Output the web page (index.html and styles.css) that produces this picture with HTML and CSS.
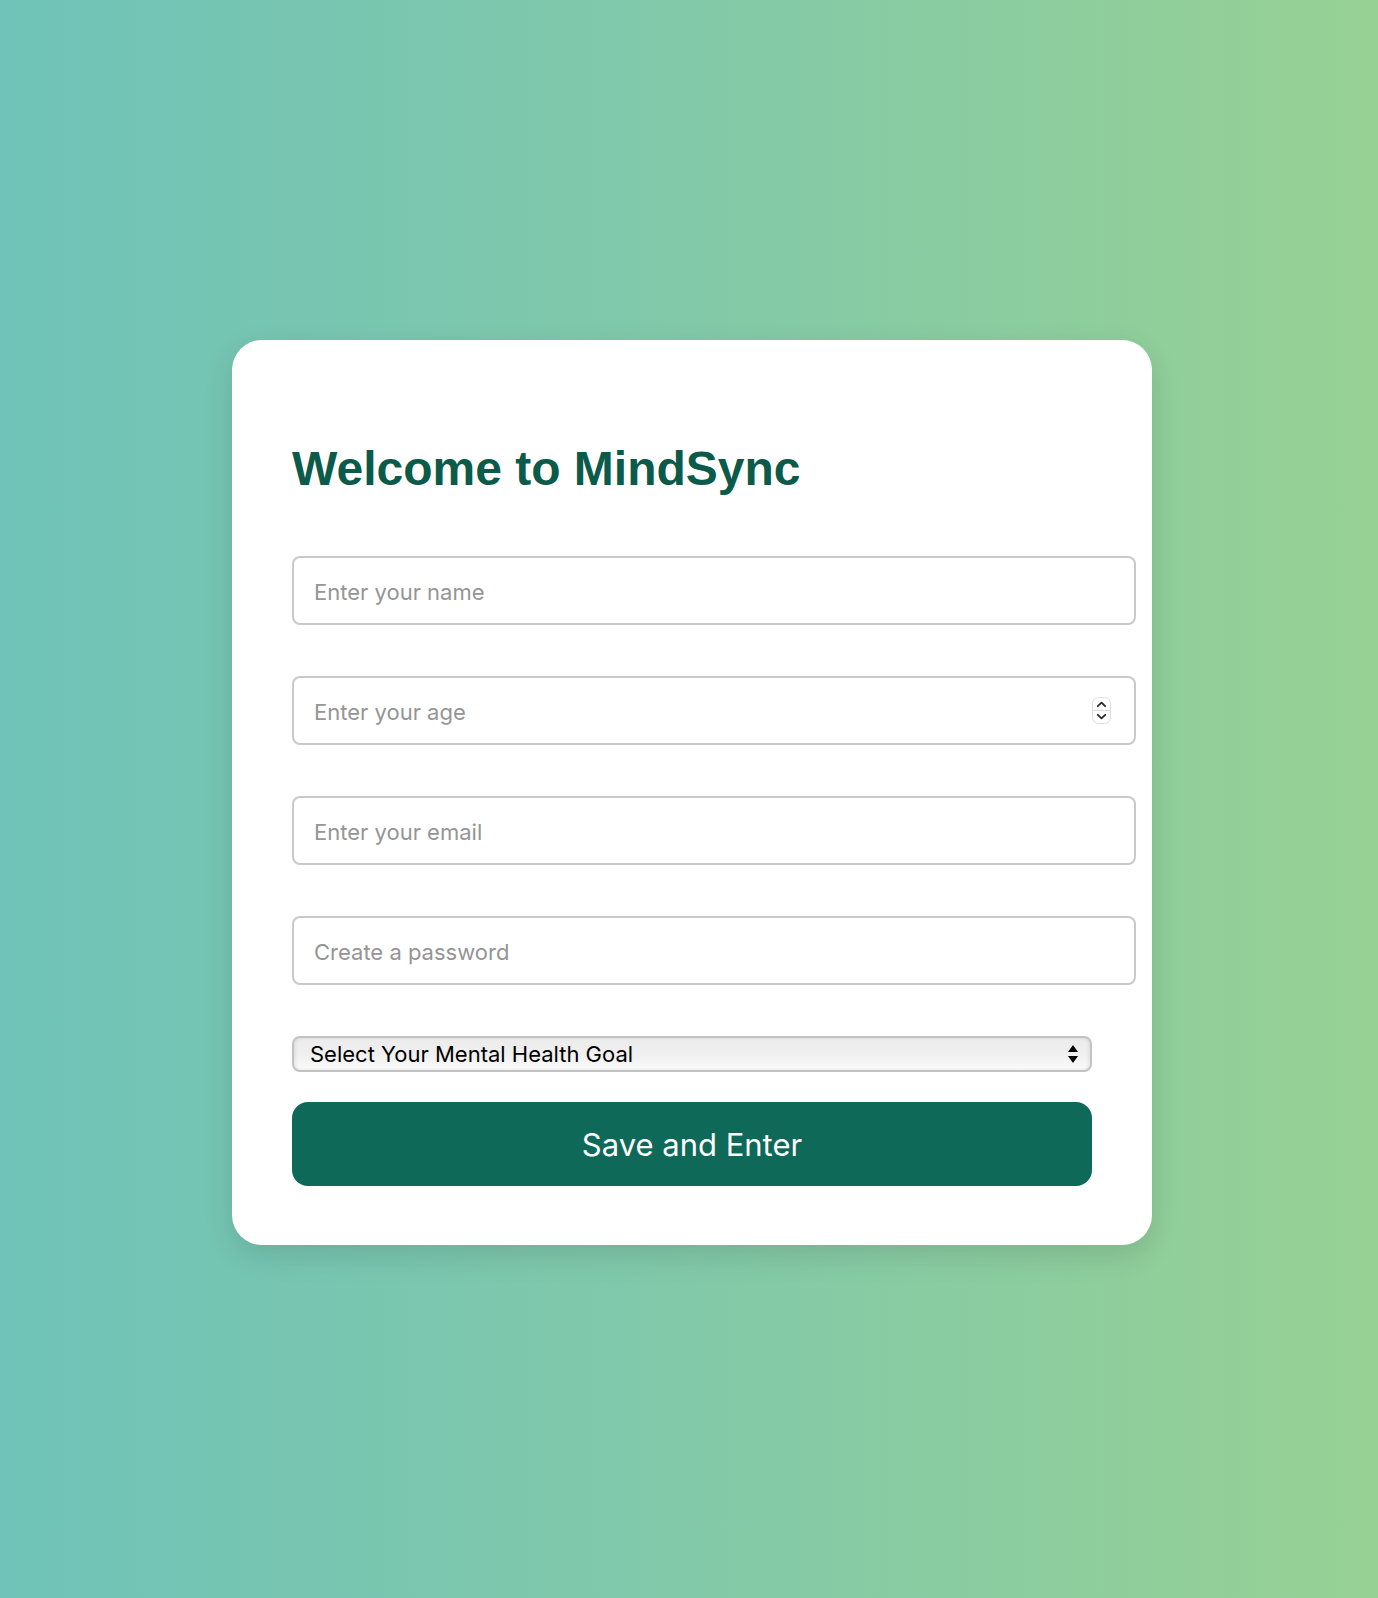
FILE: index.html
```html
<!DOCTYPE html>
<html lang="en">
<head>
<meta charset="utf-8">
<title>MindSync</title>
<link rel="stylesheet" href="styles.css">
</head>
<body>
<main class="card">
  <h1 class="title">Welcome to MindSync</h1>
  <form class="form">
    <input class="field" type="text" placeholder="Enter your name">
    <div class="field-wrap">
      <input class="field" type="text" placeholder="Enter your age">
      <svg class="spinner" width="19" height="27" viewBox="0 0 19 27" aria-hidden="true">
        <rect x="0.5" y="0.5" width="18" height="26" rx="6" fill="#fff" stroke="#dcdcdc"/>
        <line x1="1" y1="13.5" x2="18" y2="13.5" stroke="#dcdcdc"/>
        <path d="M5.8 9.2 L9.5 5.6 L13.2 9.2" fill="none" stroke="#2a2a2a" stroke-width="1.8" stroke-linecap="round" stroke-linejoin="round"/>
        <path d="M5.8 17.8 L9.5 21.4 L13.2 17.8" fill="none" stroke="#2a2a2a" stroke-width="1.8" stroke-linecap="round" stroke-linejoin="round"/>
      </svg>
    </div>
    <input class="field" type="email" placeholder="Enter your email">
    <input class="field" type="password" placeholder="Create a password">
    <div class="select-wrap">
      <select class="goal">
        <option>Select Your Mental Health Goal</option>
      </select>
      <svg class="arrows" width="10" height="18" viewBox="0 0 10 18" aria-hidden="true">
        <polygon points="5,0 10,7 0,7" fill="#000"/>
        <polygon points="0,11 10,11 5,18" fill="#000"/>
      </svg>
    </div>
    <button class="submit" type="button">Save and Enter</button>
  </form>
</main>
</body>
</html>
```

FILE: styles.css
```css
html, body {
  margin: 0;
  padding: 0;
}

body {
  min-height: 1598px;
  box-sizing: border-box;
  background: linear-gradient(90deg, #6fc3b8 0%, #82c9a9 50%, #97d194 100%);
  font-family: Inter, "Noto Sans", sans-serif;
  display: flex;
  flex-direction: column;
  align-items: center;
  padding: 340px 0 0 6px;
}

.card {
  width: 800px;
  padding: 60px 60px 59px;
  background: #ffffff;
  border-radius: 30px;
  box-shadow: 0 10px 30px rgba(0, 0, 0, 0.12);
}

.title {
  margin: 41px 0 59px;
  font-family: "Liberation Sans", Arial, sans-serif;
  font-weight: 700;
  font-size: 48px;
  line-height: 56px;
  color: #0b5a4a;
}

.form {
  display: flex;
  flex-direction: column;
}

.field-wrap {
  position: relative;
  width: 844px;
  margin-bottom: 51px;
}

.field-wrap .field {
  margin-bottom: 0;
}

.field {
  display: block;
  width: 844px;
  height: 69px;
  box-sizing: border-box;
  margin: 0 0 51px;
  padding: 2px 20px 0;
  border: 2px solid #c9c9c9;
  border-radius: 8px;
  background: #fff;
  font-family: Inter, "Noto Sans", sans-serif;
  font-size: 22px;
  color: #222;
  outline: none;
}

.field::placeholder {
  color: #959595;
}

.spinner {
  position: absolute;
  right: 25px;
  top: 21px;
}

.select-wrap {
  position: relative;
  width: 800px;
  margin-bottom: 30px;
}

.goal {
  display: block;
  width: 800px;
  height: 36px;
  box-sizing: border-box;
  margin: 0;
  padding: 0 0 0 16px;
  -webkit-appearance: none;
  appearance: none;
  border: 2px solid #c2c2c2;
  border-radius: 8px;
  background: linear-gradient(180deg, #ececec 0%, #efefef 50%, #fbfbfb 100%);
  box-shadow: inset 2px 0 3px rgba(0, 0, 0, 0.06), inset -2px 0 3px rgba(0, 0, 0, 0.06);
  font-family: Inter, "Noto Sans", sans-serif;
  font-size: 22px;
  color: #000;
  outline: none;
}

.arrows {
  position: absolute;
  right: 14px;
  top: 9px;
}

.submit {
  display: block;
  width: 800px;
  height: 84px;
  margin: 0;
  border: none;
  border-radius: 16px;
  background: #0e6959;
  color: #ffffff;
  font-family: Inter, "Noto Sans", sans-serif;
  font-size: 31px;
  font-weight: 400;
  cursor: pointer;
}
```
